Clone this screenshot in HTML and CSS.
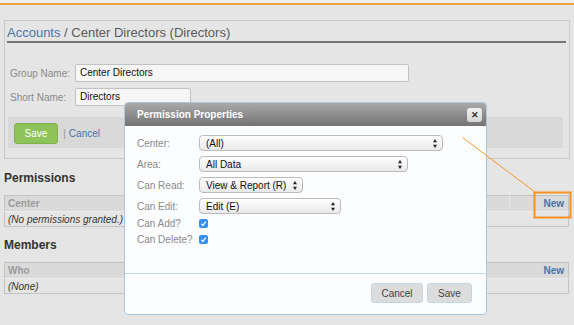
FILE: index.html
```html
<!DOCTYPE html>
<html>
<head>
<meta charset="utf-8">
<link rel="stylesheet" href="styles.css">
</head>
<body>
<div class="topbar"></div>
<main class="page">
  <section class="panel">
    <h1 class="title"><a class="link">Accounts</a> / Center Directors (Directors)</h1>
    <div class="form">
      <div class="frow"><span class="flabel">Group Name:</span><div class="input wide">Center Directors</div></div>
      <div class="frow"><span class="flabel">Short Name:</span><div class="input short">Directors</div></div>
    </div>
    <div class="actions">
      <button class="btn-save">Save</button>
      <span class="sep">|</span>
      <a class="link cancel">Cancel</a>
    </div>
  </section>

  <h2 class="heading">Permissions</h2>
  <table class="grid">
    <colgroup><col class="c-center"><col class="c-area"><col class="c-read"><col class="c-edit"><col class="c-x"><col class="c-new"></colgroup>
    <thead><tr><th>Center</th><th></th><th></th><th></th><th></th><th class="new"><a class="link">New</a></th></tr></thead>
    <tbody><tr><td colspan="6" class="empty">(No permissions granted.)</td></tr></tbody>
  </table>

  <h2 class="heading second">Members</h2>
  <table class="grid">
    <colgroup><col><col class="c-new"></colgroup>
    <thead><tr><th>Who</th><th class="new"><a class="link">New</a></th></tr></thead>
    <tbody><tr><td colspan="2" class="empty">(None)</td></tr></tbody>
  </table>
</main>

<div class="modal">
  <div class="mtitle">
    <span>Permission Properties</span>
    <span class="close">&#x2715;</span>
  </div>
  <div class="mbody">
    <div class="mrow"><span class="mlabel">Center:</span><div class="select w-center">(All)<svg class="arr" viewBox="0 0 4 9"><path d="M2 0 L4 3.3 L0 3.3Z M2 9 L4 5.7 L0 5.7Z"/></svg></div></div>
    <div class="mrow"><span class="mlabel">Area:</span><div class="select w-area">All Data<svg class="arr" viewBox="0 0 4 9"><path d="M2 0 L4 3.3 L0 3.3Z M2 9 L4 5.7 L0 5.7Z"/></svg></div></div>
    <div class="mrow"><span class="mlabel">Can Read:</span><div class="select w-read">View &amp; Report (R)<svg class="arr" viewBox="0 0 4 9"><path d="M2 0 L4 3.3 L0 3.3Z M2 9 L4 5.7 L0 5.7Z"/></svg></div></div>
    <div class="mrow last"><span class="mlabel">Can Edit:</span><div class="select w-edit">Edit (E)<svg class="arr" viewBox="0 0 4 9"><path d="M2 0 L4 3.3 L0 3.3Z M2 9 L4 5.7 L0 5.7Z"/></svg></div></div>
    <div class="crow first"><span class="mlabel">Can Add?</span><svg class="check" viewBox="0 0 9 9"><rect width="9" height="9" rx="2" fill="#3b8ef0"/><path d="M2.3 4.8 L3.9 6.4 L6.8 2.6" fill="none" stroke="#fff" stroke-width="1.2"/></svg></div>
    <div class="crow"><span class="mlabel">Can Delete?</span><svg class="check" viewBox="0 0 9 9"><rect width="9" height="9" rx="2" fill="#3b8ef0"/><path d="M2.3 4.8 L3.9 6.4 L6.8 2.6" fill="none" stroke="#fff" stroke-width="1.2"/></svg></div>
  </div>
  <div class="mfoot">
    <button class="btn">Cancel</button>
    <button class="btn">Save</button>
  </div>
</div>

<svg class="callout" width="574" height="325" viewBox="0 0 574 325">
  <line x1="462.5" y1="137.5" x2="535" y2="192" stroke="#f39a2c" stroke-width="1"/>
  <rect x="534.5" y="192.5" width="36" height="25" fill="none" stroke="#f7931e" stroke-width="2"/>
</svg>
</body>
</html>
```
FILE: styles.css
```css
* { box-sizing: border-box; }
html, body { margin: 0; padding: 0; }
body {
  background: #e5e5e5;
  font-family: "Liberation Sans", Arial, Helvetica, sans-serif;
  font-size: 10px;
  color: #222;
  width: 574px;
  height: 325px;
  overflow: hidden;
  position: relative;
}
.topbar {
  height: 5px;
  background: #efefef;
  border-bottom: 2px solid #e9a43e;
}
.page { padding: 0 4px; }
.link { color: #4a74a6; text-decoration: none; }

.panel {
  margin-top: 15px;
  width: 566px;
  height: 139px;
  border: 1px solid #c8c8c8;
  padding: 4px 0 0 0;
}
.title {
  margin: 0 3px 0 2px;
  font-size: 13px;
  font-weight: normal;
  line-height: 16px;
  color: #5b5b5b;
  border-bottom: 2px solid #777;
  padding-left: 0;
}
.form { padding: 21px 0 0 5px; }
.frow { display: flex; align-items: center; height: 18px; margin-bottom: 6px; }
.flabel { width: 65px; color: #8a8a8a; font-size: 10px; }
.input {
  height: 18px;
  border: 1px solid #c2c2c2;
  border-radius: 2px;
  background: #f6f6f6;
  color: #111;
  padding: 0 4px;
  line-height: 16px;
}
.input.wide { width: 334px; }
.input.short { width: 116px; }
.actions {
  margin: 11px 6px 0 3px;
  height: 31px;
  background: #d9d9d9;
  display: flex;
  align-items: center;
  padding: 1px 0 0 6px;
}
.btn-save {
  width: 44px;
  height: 21px;
  border: 1px solid #7fb24a;
  border-radius: 3px;
  background: #8dc35a;
  color: #fff;
  font: inherit;
  font-size: 10px;
  padding: 0;
}
.sep { color: #999; margin: 0 3px 0 5px; font-size: 11px; }
.cancel { font-size: 10px; }

.heading {
  margin: 12px 0 10px 0;
  font-size: 12px;
  line-height: 14px;
  font-weight: bold;
  color: #333;
}
.heading.second { margin-top: 11px; }
.grid {
  width: 565px;
  border-collapse: collapse;
  table-layout: fixed;
  border: 1px solid #c2c2c2;
}
.c-center { width: 130px; }
.c-area { width: 150px; }
.c-read { width: 120px; }
.c-edit { width: 104px; }
.c-x { width: 24px; }
.c-new { width: 35px; }
.grid th {
  height: 16px;
  padding: 1px 3px 0;
  background: #dadada;
  color: #9a9a9a;
  font-weight: bold;
  text-align: left;
  border-left: 1px solid #e6e6e6;
  border-bottom: 1px solid #ececec;
  line-height: 12px;
}
.grid th:first-child { border-left: 0; }
.grid th.new { text-align: right; padding-right: 4px; border-left: 0; }
.grid td {
  height: 15px;
  padding: 1px 3px 0;
  line-height: 12px;
}
.empty { font-style: italic; color: #333; }

.modal {
  position: absolute;
  left: 124px;
  top: 102px;
  width: 363px;
  height: 213px;
  border: 1px solid #abc6dc;
  border-radius: 4px;
  background: #fcfdfe;
}
.mtitle {
  height: 23px;
  background: linear-gradient(#a9a9a9, #737373);
  border-radius: 3px 3px 0 0;
  color: #fff;
  font-weight: bold;
  padding-left: 12px;
  display: flex;
  align-items: center;
  justify-content: space-between;
  padding-right: 4px;
}
.close {
  width: 15px;
  height: 14px;
  border-radius: 3px;
  background: linear-gradient(#f0f0f0, #d6d6d6);
  color: #333;
  font-size: 9px;
  font-weight: bold;
  display: flex;
  align-items: center;
  justify-content: center;
}
.mbody {
  height: 147px;
  padding: 9px 0 0 12px;
}
.mrow { display: flex; align-items: center; height: 16px; margin-bottom: 5px; }
.mrow.last { margin-bottom: 0; }
.mlabel { width: 62px; color: #8a8a8a; }
.select {
  height: 16px;
  border: 1px solid #bbb;
  border-radius: 4px;
  background: linear-gradient(#ffffff, #e9e9e9);
  color: #111;
  padding: 0 5px 0 6px;
  display: flex;
  align-items: center;
  justify-content: space-between;
}
.arr { width: 4px; height: 9px; fill: #222; }
.w-center { width: 244px; }
.w-area { width: 209px; }
.w-read { width: 104px; }
.w-edit { width: 142px; }
.crow { display: flex; align-items: center; height: 16px; }
.crow.first { margin-top: 1px; }
.check { width: 9px; height: 9px; }
.mfoot {
  border-top: 1px solid #c4daeb;
  height: 41px;
  display: flex;
  justify-content: flex-end;
  align-items: flex-start;
  gap: 4px;
  padding: 9px 14px 0 0;
}
.btn {
  height: 20px;
  border: 1px solid #c5d5e3;
  border-radius: 3px;
  background: #dcdcdc;
  color: #444;
  font: inherit;
  font-size: 10px;
  padding: 0;
}
.mfoot .btn:first-child { width: 52px; }
.mfoot .btn:last-child { width: 45px; }

.callout {
  position: absolute;
  left: 0;
  top: 0;
  pointer-events: none;
}
```
